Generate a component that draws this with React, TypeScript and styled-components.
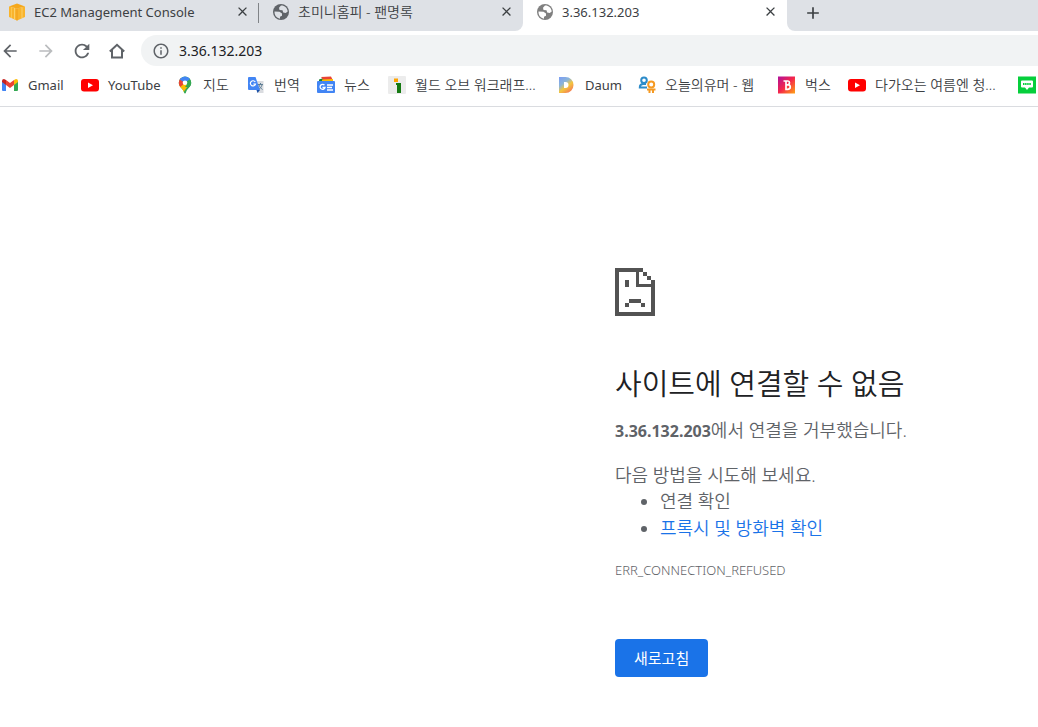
import React from "react";
import styled, { createGlobalStyle, css } from "styled-components";
import { MdArrowBack, MdArrowForward, MdRefresh, MdInfoOutline, MdClose, MdAdd } from "react-icons/md";

const GlobalStyle = createGlobalStyle`
  * { box-sizing: border-box; }
  body {
    margin: 0;
    background: #fff;
    color: #3c4043;
    font-family: "Noto Sans", "Noto Sans CJK KR", sans-serif;
    font-size: 13px;
  }
  button, input { font: inherit; color: inherit; }
  svg { display: block; flex: none; }
`;

const Window = styled.div`
  min-height: 100vh;
  overflow: hidden;
`;

const TabStrip = styled.div`
  display: flex;
  height: 31px;
  background: #fff;
`;

const Tab = styled.div<{ $active?: boolean; $last?: boolean; $divider?: boolean }>`
  display: flex;
  align-items: center;
  flex: 0 0 264px;
  height: 31px;
  padding: 0 9px 8px 13px;
  background: ${(p) => (p.$active ? "#fff" : "#dee1e6")};
  border-bottom-right-radius: ${(p) => (p.$last ? "8px" : "0")};
  ${(p) =>
    p.$divider &&
    css`
      flex-basis: 259px;
      padding-left: 8px;
      background: linear-gradient(#808387, #808387) right 3px / 1px 20px no-repeat #dee1e6;
    `}
`;

const TabTitle = styled.span<{ $hangul?: boolean }>`
  flex: 1;
  margin-left: 8px;
  font-size: ${(p) => (p.$hangul ? "14px" : "13px")};
  font-weight: ${(p) => (p.$hangul ? 350 : 400)};
  line-height: 20px;
  white-space: nowrap;
`;

const TabButton = styled.button`
  display: grid;
  place-items: center;
  width: 16px;
  height: 16px;
  padding: 0;
  border: 0;
  background: none;
  color: #3c4043;
`;

const StripRest = styled.div`
  flex: 1;
  padding: 3px 16px;
  background: #dee1e6;
  border-bottom-left-radius: 8px;
`;

const Toolbar = styled.div`
  display: flex;
  align-items: center;
  height: 39px;
`;

const NavButtons = styled.div`
  display: flex;
  justify-content: space-between;
  width: 141px;
  padding-right: 14px;
`;

const NavButton = styled.button`
  display: grid;
  place-items: center;
  width: 20px;
  height: 22px;
  padding: 0;
  border: 0;
  background: none;
  color: #5f6368;
  &:disabled { color: #babcbe; }
`;

const Omnibox = styled.label`
  display: flex;
  align-items: center;
  flex: 1;
  gap: 9px;
  height: 31px;
  padding-left: 11px;
  border-radius: 16px 0 0 16px;
  background: #f1f3f4;
  color: #5f6368;
`;

const Address = styled.input`
  flex: 1;
  min-width: 0;
  padding: 0;
  border: 0;
  outline: 0;
  background: none;
  color: #202124;
  font-size: 14px;
  line-height: 20px;
`;

const Bookmarks = styled.nav`
  display: flex;
  align-items: center;
  height: 37px;
  padding: 0 0 6px 1px;
  border-bottom: 1px solid #dadce0;
`;

const Bookmark = styled.a<{ $width: number; $hangul?: boolean }>`
  display: flex;
  align-items: center;
  flex: 0 0 ${(p) => p.$width}px;
  gap: 9px;
  color: #3c4043;
  font-size: ${(p) => (p.$hangul ? "14px" : "13px")};
  font-weight: ${(p) => (p.$hangul ? 350 : 400)};
  line-height: 20px;
  text-decoration: none;
  white-space: nowrap;
`;

const Page = styled.main`
  display: grid;
  grid-template-columns: minmax(0, 1fr) 423px;
  padding-top: 161px;
`;

const ErrorPanel = styled.section`
  grid-column: 2;
  color: #5f6368;
  font-size: 18px;
  font-weight: 350;
  line-height: 27px;
`;

const Heading = styled.h1`
  margin: 49px 0 14px;
  color: #202124;
  font-size: 29px;
  font-weight: 350;
  line-height: 38px;
`;

const Paragraph = styled.p`
  margin: 0 0 17px;
`;

const Host = styled.strong`
  font-size: 16px;
  font-weight: 700;
`;

const Suggestions = styled.div`
  line-height: 26px;
`;

const List = styled.ul`
  margin: 0;
  padding-left: 45px;
`;

const Link = styled.a`
  color: #1a73e8;
  text-decoration: none;
`;

const ErrorCode = styled.div`
  margin-top: 18px;
  font-size: 13px;
  line-height: 20px;
`;

const Reload = styled.button`
  margin-top: 59px;
  padding: 0 19px;
  height: 38px;
  border: 0;
  border-radius: 4px;
  background: #1a73e8;
  color: #fff;
  font-size: 15px;
  font-weight: 400;
`;

const GlobeIcon = ({ color, land }: { color: string; land: string }) => (
  <svg width="18" height="18" viewBox="0 0 18 18">
    <circle cx="9" cy="9" r="8" fill={color} />
    <path
      d="M9 2.500c3.500-.2 6.500 2.500 6.700 6l-2 1.500-2.500-.5-.7-2.300-3-.2-.5-2.200ZM2.500 8.500l5 .3 2.500 1.700v2.200l-2 1v2C4.500 15 2.300 12 2.500 8.500Z"
      fill={land}
    />
  </svg>
);

const Ec2Icon = () => (
  <svg width="18" height="18" viewBox="0 0 18 18">
    <path d="M1 3.500 9 5.500 17 3.500V14L9 17.500 1 14Z" fill="#f9b42d" />
    <path d="M1 3.500 9 .5l8 3L9 5.500Z" fill="#f5a81c" />
    <path d="M6.500 5v11.500M14 4.500V15" stroke="#fcd06a" fill="none" />
    <path d="M9 5.500v12" stroke="#f09d1a" />
    <path d="M3.500 4v11" stroke="#fcc74f" />
  </svg>
);

const HomeIcon = () => (
  <svg width="18" height="18" viewBox="0 0 18 18" fill="none" stroke="#5f6368" strokeWidth="2">
    <path d="M1.800 9.500 9 2.800l7.200 6.700M4 8v7.500h10V8" />
  </svg>
);

const GmailIcon = () => (
  <svg width="18" height="18" viewBox="0 0 18 18">
    <path d="M1 5v9q0 1 1 1h3V8Z" fill="#4285f4" />
    <path d="M17 5v9q0 1-1 1h-3V8Z" fill="#34a853" />
    <path d="M13 4v5l4-3V5q0-2-2-2Z" fill="#fbbc04" />
    <path d="M5 4v5L1 6V5q0-2 2-2Z" fill="#c5221f" />
    <path d="M5 4v5l4 3 4-3V4L9 7Z" fill="#ea4335" />
  </svg>
);

const YouTubeIcon = () => (
  <svg width="18" height="18" viewBox="0 0 18 18">
    <rect y="3" width="18" height="12.500" rx="3" fill="#f00" />
    <path d="M7 6.500v5.500l5-2.750Z" fill="#fff" />
  </svg>
);

const MapsIcon = () => (
  <svg width="18" height="18" viewBox="0 0 18 18">
    <defs>
      <clipPath id="pin"><path d="M9 .5a6.200 6.200 0 0 0-6.200 6.200c0 4.500 4.200 5.500 5.200 9.800.3 1.200 1.700 1.200 2 0 1-4.300 5.200-5.300 5.200-9.800A6.200 6.200 0 0 0 9 .5Z" /></clipPath>
    </defs>
    <g clipPath="url(#pin)">
      <rect width="18" height="18" fill="#34a853" />
      <path d="M0 18V10l9-3 3 3-6 8Z" fill="#fbbc04" />
      <path d="M0 2 4 2l5 5-6 5H0Z" fill="#ea4335" />
      <path d="M3 3 8 0h10L9 7Z" fill="#4285f4" />
      <path d="M9 11 16 2l3 6-6 3Z" fill="#34a853" />
    </g>
    <circle cx="9" cy="6.700" r="2.300" fill="#fff" />
  </svg>
);

const TranslateIcon = () => (
  <svg width="18" height="18" viewBox="0 0 18 18">
    <path d="M8 5h8.500v12H11Z" fill="#dadce0" />
    <path d="M11 8.500h5M13.500 7v1.500M15 9c-.5 2-2 3.500-3.500 4.500M12 9c.5 2 2 3.500 3.500 4.500" stroke="#5f7f95" fill="none" />
    <path d="M2 1h6.500l4.500 13H2Q1 14 1 13V2Q1 1 2 1Z" fill="#4285f4" />
    <path d="M9.500 14H13l-2.500 3Z" fill="#174ea6" />
    <path d="M8.200 6A2.600 2.600 0 1 0 8.500 8H6.300" stroke="#fff" strokeWidth="1.200" fill="none" />
  </svg>
);

const NewsIcon = () => (
  <svg width="18" height="18" viewBox="0 0 18 18">
    <path d="M2 3.500 8 1.500l3 4.500H2Z" fill="#188038" />
    <path d="M4 1 14 .5l2 4H7Z" fill="#ea4335" />
    <path d="M5 3.500 16 3v4H5Z" fill="#fbbc04" />
    <path d="M0 6q0-1 1-1h16q1 0 1 1v10q0 1-1 1H1q-1 0-1-1Z" fill="#4285f4" />
    <path d="M7.500 9.200A2.500 2.500 0 1 0 8 11.500H5.500M10 9h6M10 11.500h5M10 14h6" stroke="#fff" strokeWidth="1.300" fill="none" />
  </svg>
);

const InvenIcon = () => (
  <svg width="18" height="18" viewBox="0 0 18 18">
    <rect width="18" height="18" rx="1" fill="#ececec" />
    <rect x="6" y="2.500" width="4" height="3.500" fill="#ffa400" />
    <path d="M8 7h5v10h-4V9H8Z" fill="#167a12" />
  </svg>
);

const DaumIcon = () => (
  <svg width="18" height="18" viewBox="0 0 18 18">
    <defs>
      <linearGradient id="daum" x1="0" y1="0" x2=".7" y2="1">
        <stop offset="0" stopColor="#7b9df5" />
        <stop offset=".4" stopColor="#8bb5d8" />
        <stop offset=".65" stopColor="#f4c63d" />
        <stop offset="1" stopColor="#f47c55" />
      </linearGradient>
    </defs>
    <path d="M1 1h6.500a8 8 0 0 1 0 16H1ZM6 6v6h1.500a3 3 0 0 0 0-6Z" fill="url(#daum)" fillRule="evenodd" />
  </svg>
);

const HumorIcon = () => (
  <svg width="18" height="18" viewBox="0 0 18 18" fill="none" strokeWidth="2">
    <g stroke="#2d8cc9"><circle cx="6" cy="4.200" r="2.800" /><path d="M9 11.500H1.800Q1.800 8 5 8h3" /></g>
    <g stroke="#f59a23"><circle cx="13.200" cy="8.500" r="3" /><path d="M9 13.500h8.500M11.500 13v4M15 13v4" /></g>
  </svg>
);

const BugsIcon = () => (
  <svg width="18" height="18" viewBox="0 0 18 18">
    <defs>
      <linearGradient id="bugs" x1="0" y1="0" x2="1" y2="1">
        <stop offset="0" stopColor="#b0109b" />
        <stop offset=".5" stopColor="#f5264a" />
        <stop offset="1" stopColor="#ffa413" />
      </linearGradient>
    </defs>
    <rect width="17" height="17" y=".5" fill="url(#bugs)" />
    <path d="M5.500 5H10q1.500 0 1.500 1.700 0 1.500-1.500 2 2.300.3 2.300 2.300 0 2.300-2.800 2.300H8V5M8 8.800h2.500" fill="none" stroke="#fff" strokeWidth="1.700" />
  </svg>
);

const BandIcon = () => (
  <svg width="18" height="18" viewBox="0 0 18 18">
    <rect width="18" height="17" y=".5" fill="#06cf3c" />
    <path d="M4 4.500h10q1 0 1 1v5q0 1-1 1h-3L9 14l-2-2.500H4q-1 0-1-1v-5q0-1 1-1Z" fill="#fff" />
    <path d="M5 8h8" stroke="#06cf3c" strokeWidth="2" strokeDasharray="1.500 .6" />
  </svg>
);

const SadPageIcon = () => (
  <svg width="40" height="48" viewBox="0 0 40 48" shapeRendering="crispEdges">
    <path
      fill="#535353"
      d="M0 0h28v4h4v4h4v4h4v36H0ZM4 4v40h32V19H21V4ZM24 4v12h12v-4h-4V8h-4V4ZM10 12h4v7h-4ZM14 31h12v4h4v4h-4v-4H14v4h-4v-4h4Z"
      fillRule="evenodd"
    />
  </svg>
);

const bookmarks = [
  { label: "Gmail", icon: <GmailIcon />, width: 80 },
  { label: "YouTube", icon: <YouTubeIcon />, width: 95 },
  { label: "지도", icon: <MapsIcon />, width: 71, hangul: true },
  { label: "번역", icon: <TranslateIcon />, width: 70, hangul: true },
  { label: "뉴스", icon: <NewsIcon />, width: 71, hangul: true },
  { label: "월드 오브 워크래프...", icon: <InvenIcon />, width: 170, hangul: true },
  { label: "Daum", icon: <DaumIcon />, width: 80 },
  { label: "오늘의유머 - 웹", icon: <HumorIcon />, width: 140, hangul: true },
  { label: "벅스", icon: <BugsIcon />, width: 70, hangul: true },
  { label: "다가오는 여름엔 청...", icon: <YouTubeIcon />, width: 170, hangul: true },
];

export default function App() {
  return (
    <Window>
      <GlobalStyle />
      <TabStrip>
        <Tab $divider>
          <Ec2Icon />
          <TabTitle>EC2 Management Console</TabTitle>
          <TabButton aria-label="Close tab"><MdClose size={15} /></TabButton>
        </Tab>
        <Tab $last>
          <GlobeIcon color="#5f6368" land="#dee1e6" />
          <TabTitle $hangul>초미니홈피 - 팬명록</TabTitle>
          <TabButton aria-label="Close tab"><MdClose size={15} /></TabButton>
        </Tab>
        <Tab $active>
          <GlobeIcon color="#808080" land="#fff" />
          <TabTitle>3.36.132.203</TabTitle>
          <TabButton aria-label="Close tab"><MdClose size={15} /></TabButton>
        </Tab>
        <StripRest>
          <TabButton aria-label="New tab"><MdAdd size={20} /></TabButton>
        </StripRest>
      </TabStrip>
      <Toolbar>
        <NavButtons>
          <NavButton aria-label="Back"><MdArrowBack size={20} /></NavButton>
          <NavButton aria-label="Forward" disabled><MdArrowForward size={20} /></NavButton>
          <NavButton aria-label="Reload"><MdRefresh size={22} /></NavButton>
          <NavButton aria-label="Home"><HomeIcon /></NavButton>
        </NavButtons>
        <Omnibox>
          <MdInfoOutline size={18} />
          <Address aria-label="Address" defaultValue="3.36.132.203" />
        </Omnibox>
      </Toolbar>
      <Bookmarks>
        {bookmarks.map((b) => (
          <Bookmark key={b.label} href="#" $width={b.width} $hangul={b.hangul}>
            {b.icon}
            {b.label}
          </Bookmark>
        ))}
        <Bookmark href="#" aria-label="Band" $width={18}><BandIcon /></Bookmark>
      </Bookmarks>
      <Page>
        <ErrorPanel>
          <SadPageIcon />
          <Heading>사이트에 연결할 수 없음</Heading>
          <Paragraph><Host>3.36.132.203</Host>에서 연결을 거부했습니다.</Paragraph>
          <Suggestions>다음 방법을 시도해 보세요.</Suggestions>
          <List>
            <li>연결 확인</li>
            <li><Link href="#">프록시 및 방화벽 확인</Link></li>
          </List>
          <ErrorCode>ERR_CONNECTION_REFUSED</ErrorCode>
          <Reload>새로고침</Reload>
        </ErrorPanel>
      </Page>
    </Window>
  );
}
